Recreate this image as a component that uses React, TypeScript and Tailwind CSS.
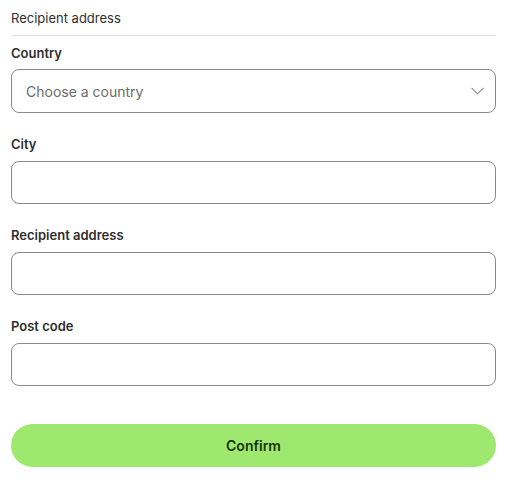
const fields = ['City', 'Recipient address', 'Post code'];

export default function App() {
  return (
    <div className="min-h-screen bg-white font-['Inter',sans-serif] text-[#2f2f2f]">
      <div className="w-[485px] ml-[11px]">
        <div className="border-b border-[#e2e2e2] pt-[10px] pb-[9px] text-[13px] leading-4">
          Recipient address
        </div>

        <div className="mt-[9px]">
          <label className="block text-[13px] font-semibold leading-4">Country</label>
          <button className="mt-[8px] flex h-[44px] w-full items-center justify-between rounded-lg border border-[#8a8a8a] pl-[14px] pr-[11px] text-[14px] text-[#6b6b6b]">
            <span>Choose a country</span>
            <svg width="13" height="8" viewBox="0 0 13 8" fill="none" className="text-[#8a8a8a]">
              <polyline points="0.5,0.8 6.5,6.8 12.5,0.8" stroke="currentColor" strokeWidth="1.1" />
            </svg>
          </button>
        </div>

        {fields.map((label) => (
          <div key={label} className="mt-[23px]">
            <label className="block text-[13px] font-semibold leading-4">{label}</label>
            <input className="mt-[9px] block h-[43px] w-full rounded-lg border border-[#8a8a8a] px-[14px] text-[14px] outline-none" />
          </div>
        ))}

        <button className="mt-[38px] h-[43px] w-full rounded-full bg-[#9fe870] text-[14px] font-semibold text-[#163300]">
          Confirm
        </button>
      </div>
    </div>
  );
}
